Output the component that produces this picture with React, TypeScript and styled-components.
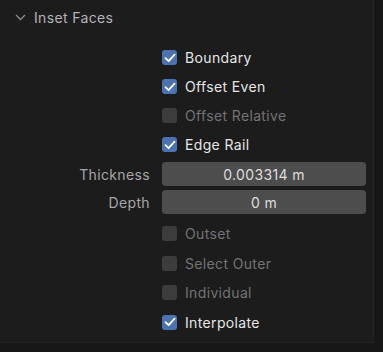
import React from "react";
import styled, { createGlobalStyle } from "styled-components";

const GlobalStyle = createGlobalStyle`
  html, body {
    margin: 0;
    padding: 0;
    background: #171717;
  }
  body {
    font-family: Inter, "DejaVu Sans", sans-serif;
    letter-spacing: 0.35px;
  }
`;

const Panel = styled.div`
  width: 374px;
  height: 343px;
  box-sizing: border-box;
  background: #1c1c1d;
  border-right: 1px solid #232324;
  border-bottom: 1px solid #232324;
`;

const Header = styled.div`
  display: flex;
  align-items: center;
  gap: 8px;
  height: 34px;
  padding-left: 15px;
  color: #b4b4b4;
  font-size: 14px;
`;

const Body = styled.div`
  display: flex;
  flex-direction: column;
  padding-top: 9px;
`;

const Row = styled.div<{ $h: number; $mt?: number }>`
  display: grid;
  grid-template-columns: 150px 1fr;
  column-gap: 12px;
  align-items: center;
  height: ${({ $h }) => $h}px;
  margin-top: ${({ $mt }) => $mt ?? 0}px;
  padding-right: 7px;
`;

const PropLabel = styled.div`
  text-align: right;
  color: #a6a6a6;
  font-size: 14px;
`;

const Check = styled.div`
  display: flex;
  align-items: center;
  gap: 8px;
  font-size: 14px;
`;

const Box = styled.div<{ $on: boolean }>`
  width: 15px;
  height: 15px;
  border-radius: 3px;
  background: ${({ $on }) => ($on ? "#4d72b0" : "#3c3c3d")};
  display: flex;
  align-items: center;
  justify-content: center;
`;

const CheckText = styled.span<{ $dim: boolean }>`
  color: ${({ $dim }) => ($dim ? "#737373" : "#e6e6e6")};
`;

const Field = styled.div`
  height: 24px;
  border-radius: 4px;
  background: #4d4d4e;
  color: #dedede;
  font-size: 14px;
  display: flex;
  align-items: center;
  justify-content: center;
`;

const Chevron = () => (
  <svg width="11" height="7" viewBox="0 0 11 7">
    <path d="M1 1 L5.5 5.5 L10 1" fill="none" stroke="#8a8a8a" strokeWidth="1.3" />
  </svg>
);

const Tick = () => (
  <svg width="12" height="10" viewBox="0 0 12 10">
    <path d="M1.5 5.2 L4.6 8.2 L10.5 1.6" fill="none" stroke="#ffffff" strokeWidth="1.8" strokeLinecap="round" strokeLinejoin="round" />
  </svg>
);

const CheckRow = ({ label, on, dim, mt, h = 29 }: { label: string; on: boolean; dim?: boolean; mt?: number; h?: number }) => (
  <Row $h={h} $mt={mt}>
    <span />
    <Check>
      <Box $on={on}>{on && <Tick />}</Box>
      <CheckText $dim={!!dim}>{label}</CheckText>
    </Check>
  </Row>
);

export default function App() {
  return (
    <>
      <GlobalStyle />
      <Panel>
        <Header>
          <Chevron />
          <span>Inset Faces</span>
        </Header>
        <Body>
          <CheckRow label="Boundary" on />
          <CheckRow label="Offset Even" on />
          <CheckRow label="Offset Relative" on={false} dim />
          <CheckRow label="Edge Rail" on />
          <Row $h={28} $mt={1}>
            <PropLabel>Thickness</PropLabel>
            <Field>0.003314 m</Field>
          </Row>
          <Row $h={28}>
            <PropLabel>Depth</PropLabel>
            <Field>0 m</Field>
          </Row>
          <CheckRow label="Outset" on={false} dim mt={3} h={29.5} />
          <CheckRow label="Select Outer" on={false} dim h={29.5} />
          <CheckRow label="Individual" on={false} dim h={29.5} />
          <CheckRow label="Interpolate" on h={29.5} />
        </Body>
      </Panel>
    </>
  );
}
